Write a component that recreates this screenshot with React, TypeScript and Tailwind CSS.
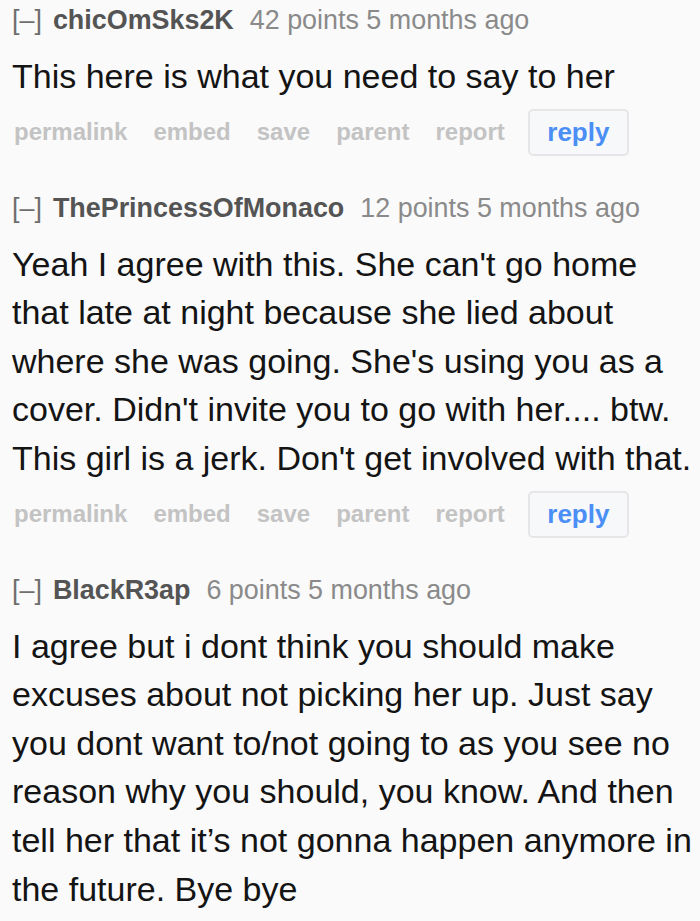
const comments = [
  {
    user: 'chicOmSks2K',
    meta: '42 points 5 months ago',
    lines: ['This here is what you need to say to her'],
    actions: true,
  },
  {
    user: 'ThePrincessOfMonaco',
    meta: '12 points 5 months ago',
    lines: [
      "Yeah I agree with this. She can't go home",
      'that late at night because she lied about',
      "where she was going. She's using you as a",
      "cover. Didn't invite you to go with her.... btw.",
      "This girl is a jerk. Don't get involved with that.",
    ],
    actions: true,
  },
  {
    user: 'BlackR3ap',
    meta: '6 points 5 months ago',
    lines: [
      'I agree but i dont think you should make',
      'excuses about not picking her up. Just say',
      'you dont want to/not going to as you see no',
      'reason why you should, you know. And then',
      'tell her that it\u2019s not gonna happen anymore in',
      'the future. Bye bye',
    ],
    actions: false,
  },
];

function Comment({ c }: { c: (typeof comments)[number] }) {
  return (
    <div className="flex flex-col mb-[32px]">
      <div className="flex items-center h-[40px] text-[26.9px] leading-[40px] whitespace-nowrap">
        <span className="text-[#6e6e6e]">[–]</span>
        <span className="ml-[11px] font-bold text-[#545454]">{c.user}</span>
        <span className="ml-[16px] text-[#8a8a8a]">{c.meta}</span>
      </div>
      <p className="mt-[12px] text-[34px] leading-[48.6px] text-[#141414] whitespace-nowrap">
        {c.lines.map((l, i) => (
          <span key={i} className="block">
            {l}
          </span>
        ))}
      </p>
      {c.actions && (
        <div className="mt-[8px] flex items-center h-[47px] text-[24px] font-bold text-[#c3c3c3]">
          <div className="flex gap-[26px] pl-[2px]">
            <span>permalink</span>
            <span>embed</span>
            <span>save</span>
            <span>parent</span>
            <span>report</span>
          </div>
          <button className="ml-[23px] h-[47px] w-[101px] rounded-[5px] border-2 border-[#e6e6e8] bg-[#f7f8fa] text-[26px] font-bold text-[#4a8ef6]">
            reply
          </button>
        </div>
      )}
    </div>
  );
}

export default function App() {
  return (
    <div
      className="w-[700px] h-[921px] overflow-hidden bg-[#fafafa] pl-[12px]"
      style={{ fontFamily: '"Liberation Sans", Arial, sans-serif' }}
    >
      {comments.map((c) => (
        <Comment key={c.user} c={c} />
      ))}
    </div>
  );
}
